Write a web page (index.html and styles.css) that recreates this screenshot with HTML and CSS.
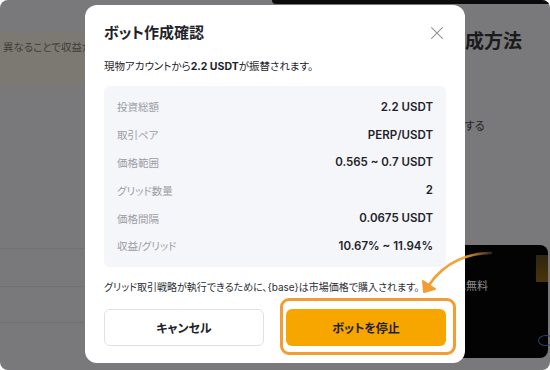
FILE: index.html
```html
<!DOCTYPE html>
<html lang="ja">
<head>
<meta charset="utf-8">
<title>ボット作成確認</title>
<link rel="stylesheet" href="styles.css">
</head>
<body>
<div class="screen">
  <div class="page">
    <div class="topbar">
      <div class="topbar-gap"></div>
      <div class="topbar-dark"></div>
    </div>
    <div class="page-body">
      <div class="left-col">
        <div class="banner"><p class="banner-text">異なることで収益が得られます</p></div>
        <div class="left-rows">
          <div class="left-row"></div>
          <div class="left-row"></div>
          <div class="left-row"></div>
        </div>
      </div>
      <div class="spacer"></div>
      <div class="right-col">
        <h2 class="how-title">作成方法</h2>
        <p class="how-text">にする</p>
        <div class="promo">
          <p class="promo-text">は無料</p>
          <div class="promo-img"></div>
          <div class="promo-ring"></div>
        </div>
      </div>
    </div>
  </div>

  <div class="modal">
    <div class="modal-head">
      <h1 class="title">ボット作成確認</h1>
      <svg class="close" viewBox="0 0 12 12" width="12" height="12" aria-label="閉じる">
        <path d="M0.6 0.6 L11.4 11.4 M11.4 0.6 L0.6 11.4" stroke="#8f939b" stroke-width="1.1" fill="none" stroke-linecap="round"/>
      </svg>
    </div>
    <p class="subtitle">現物アカウントから<b>2.2 USDT</b>が振替されます。</p>
    <div class="summary">
      <div class="summary-row"><span class="label">投資総額</span><span class="value">2.2 USDT</span></div>
      <div class="summary-row"><span class="label">取引ペア</span><span class="value">PERP/USDT</span></div>
      <div class="summary-row"><span class="label">価格範囲</span><span class="value">0.565 ~ 0.7 USDT</span></div>
      <div class="summary-row"><span class="label">グリッド数量</span><span class="value">2</span></div>
      <div class="summary-row"><span class="label">価格間隔</span><span class="value">0.0675 USDT</span></div>
      <div class="summary-row"><span class="label">収益/グリッド</span><span class="value">10.67% ~ 11.94%</span></div>
    </div>
    <p class="note">グリッド取引戦略が執行できるために、{base}は市場価格で購入されます。</p>
    <div class="actions">
      <button class="btn btn-cancel">キャンセル</button>
      <div class="primary-wrap">
        <button class="btn btn-primary">ボットを停止</button>
        <div class="highlight"></div>
      </div>
    </div>
  </div>

  <svg class="arrow" viewBox="0 0 85 55" width="85" height="55">
    <defs>
      <linearGradient id="tail" x1="0" y1="0" x2="1" y2="0">
        <stop offset="0" stop-color="#f39c33" stop-opacity="1"/>
        <stop offset="0.6" stop-color="#f39c33" stop-opacity="0.9"/>
        <stop offset="1" stop-color="#f7b560" stop-opacity="0.2"/>
      </linearGradient>
    </defs>
    <path d="M76 8 C 55 8, 30 16, 14 40" stroke="url(#tail)" stroke-width="2.6" fill="none" stroke-linecap="round"/>
    <path d="M8 36 L9 47 L20 44 Z" fill="#f39c33" stroke="#f39c33" stroke-width="2" stroke-linejoin="round"/>
  </svg>
</div>
</body>
</html>
```

FILE: styles.css
```css
* {
  box-sizing: border-box;
}

html, body {
  margin: 0;
  padding: 0;
  background: #ffffff;
}

body {
  font-family: "Inter", "Noto Sans CJK JP", sans-serif;
  font-feature-settings: "palt";
}

.screen {
  position: relative;
  width: 550px;
  height: 370px;
  overflow: hidden;
  border-radius: 8px;
  background: #79797b;
}

/* ---------- dimmed background page ---------- */
.page {
  display: flex;
  flex-direction: column;
  height: 100%;
}

.topbar {
  display: flex;
  height: 4px;
}

.topbar-gap {
  width: 272px;
}

.topbar-dark {
  flex: 1;
  background: #0b0b0c;
  border-radius: 0 0 0 6px;
}

.page-body {
  flex: 1;
  display: flex;
}

.left-col {
  width: 260px;
  padding-top: 29px;
}

.banner {
  height: 52px;
  background: #7c7973;
  overflow: hidden;
}

.banner-text {
  margin: 8px 0 0 3px;
  white-space: nowrap;
  font-size: 10.5px;
  line-height: 14px;
  color: #3e3d3a;
}

.left-rows {
  padding-top: 163px;
}

.left-row {
  height: 38px;
  border-top: 1px solid #707174;
}

.left-row:nth-child(2) {
  height: 36px;
}

.spacer {
  flex: 1;
}

.right-col {
  width: 104px;
  display: flex;
  flex-direction: column;
}

.how-title {
  margin: 26px 0 0;
  font-size: 19px;
  line-height: 24px;
  font-weight: 700;
  color: #1b1b1c;
  white-space: nowrap;
}

.how-text {
  margin: 65px 0 0;
  padding-left: 8px;
  font-size: 11px;
  line-height: 14px;
  color: #232324;
}

.promo {
  position: relative;
  margin: 112px 2px 0 0;
  height: 113px;
  background: #030303;
  border-radius: 0 8px 8px 0;
  display: flex;
  align-items: flex-start;
  padding: 10px 0 0 9px;
}

.promo-text {
  margin: 24px 0 0;
  font-size: 11px;
  line-height: 14px;
  color: #8e8e90;
}

.promo-img {
  margin-left: auto;
  width: 12px;
  height: 27px;
  background: linear-gradient(180deg, #2e2410, #4a3509);
}

.promo-ring {
  position: absolute;
  right: -6px;
  bottom: 12px;
  width: 16px;
  height: 11px;
  border: 1px solid #25406e;
  border-radius: 50%;
}

/* ---------- modal ---------- */
.modal {
  position: absolute;
  left: 85px;
  top: 5px;
  width: 380px;
  padding: 18px 19px 17px;
  background: #ffffff;
  border-radius: 12px;
  color: #1e2329;
}

.modal-head {
  display: flex;
  justify-content: space-between;
  align-items: center;
  height: 20px;
}

.title {
  margin: 0;
  font-size: 15px;
  line-height: 20px;
  font-weight: 700;
  color: #1e2329;
}

.close {
  margin-right: 3px;
  display: block;
}

.subtitle {
  margin: 17px 0 0;
  font-size: 10.5px;
  line-height: 14px;
  color: #1e2329;
}

.subtitle b {
  font-weight: 700;
}

.summary {
  margin-top: 12px;
  padding: 7px 13px;
  background: #f5f6fa;
  border-radius: 6px;
}

.summary-row {
  display: flex;
  justify-content: space-between;
  align-items: center;
  height: 27.8px;
}

.label {
  font-size: 10.5px;
  color: #9a9da4;
}

.value {
  font-size: 11.5px;
  font-weight: 600;
  color: #1e2329;
}

.note {
  margin: 13px 0 0;
  font-size: 10px;
  line-height: 14px;
  color: #2b2f36;
  white-space: nowrap;
}

.actions {
  margin-top: 15px;
  display: grid;
  grid-template-columns: 1fr 1fr;
  gap: 22px;
}

.btn {
  display: block;
  width: 100%;
  height: 37px;
  border-radius: 6px;
  font-family: inherit;
  font-feature-settings: "palt";
  font-size: 12px;
  font-weight: 700;
  color: #1e2329;
  cursor: pointer;
}

.btn-cancel {
  background: #ffffff;
  border: 1px solid #dfe1e5;
}

.btn-primary {
  background: #f7a600;
  border: none;
}

.primary-wrap {
  position: relative;
}

.highlight {
  position: absolute;
  top: -11px;
  bottom: -9px;
  left: -6px;
  right: -10px;
  border: 3px solid #f39c33;
  border-radius: 9px;
  pointer-events: none;
}

/* ---------- annotation arrow ---------- */
.arrow {
  position: absolute;
  left: 415px;
  top: 245px;
}
```
